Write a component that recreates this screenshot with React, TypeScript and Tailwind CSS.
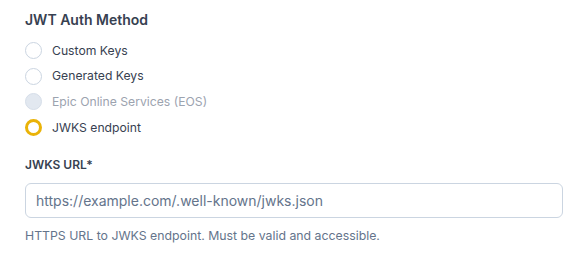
import React from "react";

const options = [
  { label: "Custom Keys", state: "off" },
  { label: "Generated Keys", state: "off" },
  { label: "Epic Online Services (EOS)", state: "disabled" },
  { label: "JWKS endpoint", state: "on" },
];

export default function App() {
  return (
    <div className="bg-white w-[587px] h-[259px] px-[25px] pt-[10px]" style={{ fontFamily: "Inter, sans-serif" }}>
      <h2 className="text-[14px] leading-[20px] font-semibold text-[#374151]">JWT Auth Method</h2>
      <div className="mt-[12px] flex flex-col gap-[8.7px]">
        {options.map((o) => (
          <label key={o.label} className="flex items-center gap-[10px] h-[17px]">
            {o.state === "on" ? (
              <span className="w-[17px] h-[17px] rounded-full border-[3.5px] border-[#eab308] bg-white shrink-0" />
            ) : o.state === "disabled" ? (
              <span className="w-[17px] h-[17px] rounded-full border border-[#d6dee9] bg-[#e2e8f0] shrink-0" />
            ) : (
              <span className="w-[17px] h-[17px] rounded-full border border-[#cbd5e1] bg-white shrink-0" />
            )}
            <span className={"text-[12.2px] leading-[16px] " + (o.state === "disabled" ? "text-[#9ca3af]" : "text-[#374151]")}>
              {o.label}
            </span>
          </label>
        ))}
      </div>
      <div className="mt-[21px] text-[12px] leading-[16px] font-semibold text-[#374151]">JWKS URL*</div>
      <input
        className="block mt-[10px] w-[538px] h-[35px] rounded-md border border-[#cbd5e1] px-[10px] text-[14px] text-[#64748b] outline-none placeholder:text-[#64748b]"
        placeholder="https://example.com/.well-known/jwks.json"
        style={{ fontFamily: "Inter, sans-serif" }}
      />
      <div className="mt-[10px] text-[12.3px] leading-[16px] text-[#64748b]">HTTPS URL to JWKS endpoint. Must be valid and accessible.</div>
    </div>
  );
}
